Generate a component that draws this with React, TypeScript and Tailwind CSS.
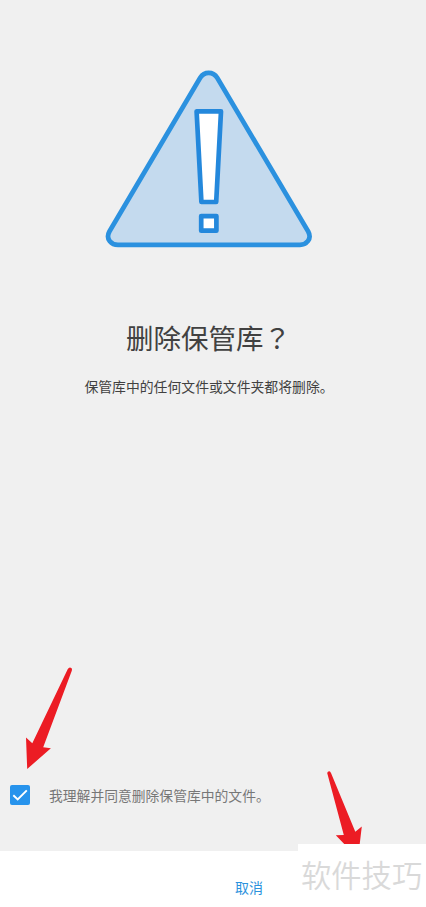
import { useState } from "react";

function WarningIcon() {
  return (
    <svg width="210" height="182" viewBox="104 68 210 182" fill="none" strokeLinejoin="round">
      <path
        d="M200.2 77.8 Q203.3 72.9 208.7 72.9 Q214.1 72.9 217.2 77.8 L308.2 231.5 Q311.2 237 307.8 241.2 Q305 244.9 300 244.9 H118 Q112.8 244.9 109.8 241.2 Q106.4 237 109.4 231.5 Z"
        fill="#c4daee"
        stroke="#2b91df"
        strokeWidth="4.7"
      />
      <path d="M196.6 111.4 H221 L216.2 202 H201.4 Z" fill="#fff" stroke="#2488dc" strokeWidth="4.7" />
      <rect x="201.2" y="216.1" width="15.2" height="14.6" fill="#fff" stroke="#2488dc" strokeWidth="4.7" />
    </svg>
  );
}

export default function App() {
  const [agreed, setAgreed] = useState(true);

  return (
    <div className="relative flex h-[907px] w-[426px] flex-col overflow-hidden bg-[#f0f0f0] font-['Noto_Sans_CJK_SC',sans-serif]">
      {/* Message */}
      <main className="flex flex-1 flex-col items-center pt-[68px]">
        <div className="mr-2">
          <WarningIcon />
        </div>
        <h1 className="mt-[67px] h-10 pr-[9px] text-[27.5px] leading-10 whitespace-nowrap text-[#414141]">
          删除保管库
          <span className="font-['Noto_Sans_CJK_TC',sans-serif]">？</span>
        </h1>
        <p className="mt-[19px] h-5 pr-[8px] text-[13.85px] leading-5 whitespace-nowrap text-[#414141]">
          保管库中的任何文件或文件夹都将删除。
        </p>
      </main>

      {/* Consent */}
      <button
        type="button"
        role="checkbox"
        aria-checked={agreed}
        onClick={() => setAgreed(!agreed)}
        className="mb-[46px] flex h-5 items-center pl-[10px] text-left"
      >
        <span className="flex size-5 items-center justify-center rounded-[2px] bg-[#2793ec]">
          {agreed && (
            <svg width="20" height="20" viewBox="0 0 20 20" fill="none">
              <path d="M3.3 10.3 L7.7 14.5 L16.8 5.3" stroke="#fff" strokeWidth="1.9" />
            </svg>
          )}
        </span>
        <span className="ml-[19px] text-[13.8px] leading-5 whitespace-nowrap text-[#777]">
          我理解并同意删除保管库中的文件。
        </span>
      </button>

      {/* Footer */}
      <footer className="flex h-14 bg-white pt-[26px] pl-[235px]">
        <button type="button" className="h-5 text-[14px] leading-5 text-[#2b92dd]">
          取消
        </button>
      </footer>

      {/* Pointer arrows */}
      <svg className="absolute top-[664px] left-5" width="60" height="110" viewBox="20 664 60 110">
        <path
          d="M27.2 769 L26 737.5 L32.3 743.2 L67.8 669 Q69.3 666.6 71.4 668 Q72.4 669 71.7 671 L43.2 747.3 L50.9 748.2 Z"
          fill="#ec1c24"
        />
      </svg>
      <svg className="absolute top-[768px] left-[320px]" width="50" height="80" viewBox="320 768 50 80">
        <path
          d="M327.2 773 Q327.8 770.8 330 771.4 L331 773 L355.3 831.8 L361.8 826.5 L359 850 L350 850 L335.8 835.2 L343.8 835 Z"
          fill="#ec1c24"
        />
      </svg>

      {/* Corner label */}
      <div className="absolute right-0 bottom-0 h-[63px] w-32 bg-white pl-[3px] text-[30.3px] leading-[60px] font-[350] whitespace-nowrap text-[#d9d9d9]">
        软件技巧
      </div>
    </div>
  );
}
